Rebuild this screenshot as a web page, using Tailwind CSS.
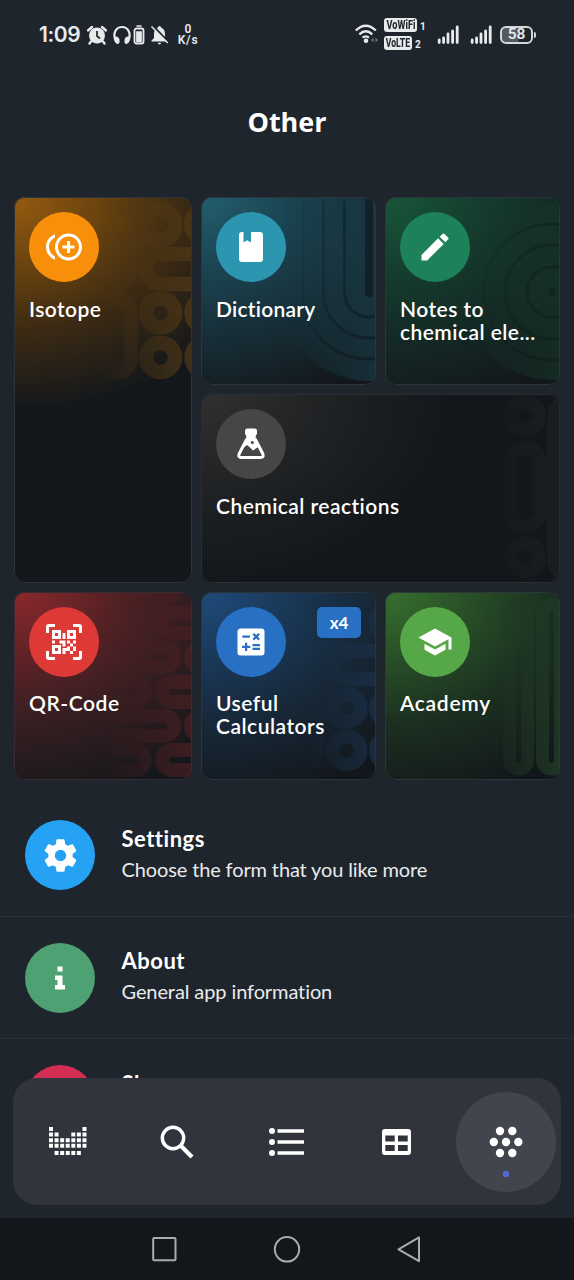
<!DOCTYPE html>
<html lang="en">
<head>
<meta charset="utf-8">
<meta name="viewport" content="width=device-width, initial-scale=1">
<title>Other</title>
<script src="https://cdn.jsdelivr.net/npm/@tailwindcss/browser@4"></script>
</head>
<body class="bg-[#1f252c]">
<div class="relative flex h-[1280px] w-[574px] flex-col overflow-hidden bg-[#1f252c] font-['Lato','Liberation_Sans',sans-serif] text-white">

  <!-- status bar -->
  <header class="flex h-[69px] shrink-0 items-center pl-[39px] text-[#e8eaec]">
    <span class="w-[48px] font-['Inter',sans-serif] text-[21px] leading-6 font-semibold whitespace-nowrap tracking-[-0.4px]">1:09</span>
    <svg class="mr-[6px] h-[20px] w-[20px]" viewBox="0 0 20 20" fill="currentColor"><circle cx="10" cy="10.5" r="8"/><path d="M1 5.5 5 2M19 5.5 15 2M4 16.5 2.5 18.5M16 16.5l1.500 2" fill="none" stroke="currentColor" stroke-width="2.4" stroke-linecap="round"/><path d="M10 6v5l3 2.500" fill="none" stroke="#1f252c" stroke-width="1.700"/></svg>
    <svg class="mr-[2px] h-[20px] w-[18px]" viewBox="0 0 18 20"><path d="M2.500 15.500C-.5 8 3 2 9 2s9.500 6 6.500 13.500" fill="none" stroke="currentColor" stroke-width="2.200"/><path d="M2 11.500q4-.5 4.500 3.500t-2 4q-3.500-1-3.500-7.500zM16 11.500q-4-.5-4.500 3.500t2 4q3.500-1 3.500-7.500z" fill="currentColor"/></svg>
    <svg class="mr-[5px] h-[20px] w-[12px]" viewBox="0 0 12 20"><rect x="1.500" y="3.500" width="9" height="15" rx="2" fill="none" stroke="currentColor" stroke-width="1.800"/><path d="M3.500 1h5M3.800 7h4.400v9.500H3.800z" stroke="currentColor" stroke-width="1.300" fill="currentColor"/></svg>
    <svg class="mr-[7px] h-[20px] w-[19px]" viewBox="0 0 19 20"><path d="M9.500 1q-1.500 0-1.500 1.500Q4 4 4 9v4L1.500 15.500v1h16v-1L15 13V9q0-5-4-6.500Q11 1 9.500 1zM7.800 17.800h3.400q-.3 1.700-1.700 1.700t-1.700-1.700z" fill="currentColor"/><path d="M3 1 18.500 17" stroke="#1f252c" stroke-width="2"/><path d="M1.500 1.500 17.800 18" stroke="currentColor" stroke-width="1.500"/></svg>
    <span class="flex w-[24px] flex-col items-center font-['Roboto',sans-serif] text-[12px] leading-[11px] font-semibold"><span>0</span><span class="text-[12px] leading-[11px] tracking-[0.8px]">K/s</span></span>

    <svg class="mt-[-1px] ml-[154px] h-[22px] w-[26px]" viewBox="0 0 26 22"><g fill="none" stroke="currentColor" stroke-width="2.300"><path d="M1.800 7.500q10-9.500 20 0M5.300 11.300q6.500-6 13 0M8.600 14.700q3.200-2.700 6.400 0"/></g><circle cx="12" cy="17.700" r="2.300" fill="currentColor"/><path d="M19.500 14.500v5l-2.500-2.500zM21.500 14.500v5l2.500-2.500z" fill="#72777d"/></svg>
    <span class="mt-[-1px] ml-[4px] flex w-[44px] flex-col gap-[4px] font-['Roboto',sans-serif]">
      <span class="flex items-end gap-[3px]"><span class="flex h-[14px] w-[33px] items-center justify-center rounded-[3px] bg-[#e8eaec] text-[12px] leading-none font-extrabold text-[#1f252c]"><span class="scale-x-[0.76]">VoWiFi</span></span><span class="text-[10px] leading-[10px] font-bold">1</span></span>
      <span class="flex items-end gap-[3px]"><span class="flex h-[14px] w-[28px] items-center justify-center rounded-[3px] bg-[#e8eaec] text-[12px] leading-none font-extrabold text-[#1f252c]"><span class="scale-x-[0.72]">VoLTE</span></span><span class="text-[10px] leading-[10px] font-bold">2</span></span>
    </span>
    <svg class="ml-[9px] h-[20px] w-[23px]" viewBox="0 0 23 20"><path d="M2.200 15v2.500M6.600 13v4.500M11 9v8.500M15.600 6v11.500M20.200 2v15.500" stroke="currentColor" stroke-width="2.800" stroke-linecap="round"/></svg>
    <svg class="ml-[10px] h-[20px] w-[23px]" viewBox="0 0 23 20"><path d="M2.200 15v2.500M6.600 13v4.500M11 9v8.500M15.600 6v11.500M20.200 2v15.500" stroke="currentColor" stroke-width="2.800" stroke-linecap="round"/></svg>
    <span class="ml-[7px] flex h-[18px] w-[33px] items-center justify-center rounded-[6px] border-2 border-[#d5d8da] bg-linear-to-r from-[#555a60] from-55% to-[#1f252c] to-60% font-['Roboto',sans-serif] text-[15.5px] leading-none font-semibold">58</span>
    <span class="ml-[1px] h-[6px] w-[2px] rounded-r-sm bg-[#d5d8da]"></span>
  </header>

  <h1 class="flex h-[128px] shrink-0 items-start justify-center pt-[34px] font-['Open_Sans','Noto_Sans',sans-serif] text-[27px] leading-[37px] font-bold">Other</h1>

  <!-- tiles -->
  <main class="ml-[14px] grid shrink-0 grid-cols-[178px_175px_175px] grid-rows-[188px_189px_188px] gap-x-[9px] gap-y-[9px] text-[21px] leading-[23px] font-semibold tracking-[0.45px]">

    <section class="relative row-span-2 overflow-hidden rounded-[11px] bg-[#13171b] p-[15px]">
      <div class="absolute inset-x-0 top-0 h-[215px] bg-[radial-gradient(ellipse_270px_215px_at_0_0,#965b10_0%,#6a430f_32%,#3c2a13_62%,#13171b_100%)]"></div>
      <svg class="absolute inset-x-0 top-0 h-[190px] w-[178px] [mask-image:linear-gradient(to_right,transparent_48%,black_115%)]" viewBox="0 0 178 190" fill="none" stroke="#503816" stroke-width="14.500">
        <rect x="10" y="12.500" width="151.500" height="30" rx="15"/><circle cx="192" cy="27.500" r="15"/>
        <rect x="10" y="57" width="106" height="30" rx="15"/><rect x="131" y="57" width="120" height="30" rx="15"/>
        <rect x="86" y="101.500" width="30.500" height="75" rx="15"/><circle cx="146.500" cy="116" r="14.500"/><circle cx="146.500" cy="160.500" r="14.500"/><circle cx="192" cy="116" r="14.500"/><circle cx="192" cy="160.500" r="14.500"/>
      </svg>
      <div class="absolute inset-0 rounded-[11px] border border-[#2e3239]"></div>
      <div class="relative flex size-[70px] items-center justify-center rounded-full bg-[#f88f0b]"><svg class="size-9" viewBox="0 0 24 24" fill="#fff"><path d="M16 8h-2v3h-3v2h3v3h2v-3h3v-2h-3zM2 12c0-2.790 1.640-5.200 4.010-6.320V3.520C2.520 4.760 0 8.090 0 12s2.520 7.240 6.010 8.480v-2.160C3.640 17.200 2 14.790 2 12zm13-9c-4.960 0-9 4.040-9 9s4.040 9 9 9 9-4.040 9-9-4.040-9-9-9zm0 16c-3.860 0-7-3.140-7-7s3.140-7 7-7 7 3.140 7 7-3.140 7-7 7z"/></svg></div>
      <h2 class="relative mt-[15px]">Isotope</h2>
    </section>

    <section class="relative overflow-hidden rounded-[11px] bg-[#13171b] p-[15px]">
      <div class="absolute inset-0 bg-[radial-gradient(ellipse_270px_215px_at_0_0,#235e6e_0%,#1b4552_32%,#17303a_62%,#13171b_100%)]"></div>
      <svg class="absolute inset-0 h-[188px] w-[175px] [mask-image:linear-gradient(to_right,transparent_48%,black_105%)]" viewBox="0 0 175 188" fill="none">
        <path d="M80 4v92a88 88 0 0 0 176 0V4z" fill="#1a3c47" fill-opacity=".75"/>
        <g stroke="#13222a" stroke-width="3"><path d="M101.500 4v92a66 66 0 0 0 132 0V4M122.500 4v92a45 45 0 0 0 90 0V4M143.500 4v92a24 24 0 0 0 48 0V4"/></g>
        <path d="M168 4v92" stroke="#121f27" stroke-width="8" stroke-linecap="round"/>
      </svg>
      <div class="absolute inset-0 rounded-[11px] border border-[#2c343c]"></div>
      <div class="relative flex size-[70px] items-center justify-center rounded-full bg-[#2c95af]"><svg class="size-9" viewBox="0 0 24 24" fill="#fff"><path d="M18 22a2 2 0 0 0 2-2V4a2 2 0 0 0-2-2h-6v7L9.500 7.500 7 9V2H6a2 2 0 0 0-2 2v16a2 2 0 0 0 2 2z"/></svg></div>
      <h2 class="relative mt-[15px] tracking-[0.25px]">Dictionary</h2>
    </section>

    <section class="relative overflow-hidden rounded-[11px] bg-[#13171b] p-[15px]">
      <div class="absolute inset-0 bg-[radial-gradient(ellipse_270px_215px_at_0_0,#18563b_0%,#153f2f_32%,#142c26_62%,#13171b_100%)]"></div>
      <svg class="absolute inset-0 h-[188px] w-[175px] [mask-image:linear-gradient(to_right,transparent_45%,black_110%)]" viewBox="0 0 175 188" fill="none">
        <circle cx="167" cy="95" r="88" fill="#163529" fill-opacity=".8"/>
        <g stroke="#12241f" stroke-width="3"><circle cx="167" cy="95" r="25"/><circle cx="167" cy="95" r="47"/><circle cx="167" cy="95" r="68"/></g><circle cx="167" cy="95" r="4" fill="#12241f"/>
      </svg>
      <div class="absolute inset-0 rounded-[11px] border border-[#2b3539]"></div>
      <div class="relative flex size-[70px] items-center justify-center rounded-full bg-[#1d8159]"><svg class="size-9" viewBox="0 0 24 24" fill="#fff"><path d="M3 17.250V21h3.750L17.810 9.940l-3.750-3.750zM20.710 7.040a1 1 0 0 0 0-1.410l-2.340-2.340a1 1 0 0 0-1.410 0l-1.830 1.830 3.750 3.750z"/></svg></div>
      <h2 class="relative mt-[15px] whitespace-nowrap">Notes to<br>chemical ele...</h2>
    </section>

    <section class="relative col-span-2 overflow-hidden rounded-[11px] bg-[#13171b] p-[15px]">
      <div class="absolute inset-0 bg-[radial-gradient(ellipse_250px_190px_at_0_0,#303030_0%,#212325_45%,#13171b_100%)]"></div>
      <svg class="absolute inset-0 h-[189px] w-[359px] [mask-image:linear-gradient(to_right,transparent_78%,black_100%)]" viewBox="0 0 359 189" fill="none" stroke="#1b1e21" stroke-width="14">
        <circle cx="324" cy="22" r="14"/><rect x="309.500" y="54" width="29" height="79" rx="14.500"/><circle cx="324" cy="163" r="14"/><rect x="353" y="8" width="29" height="172" rx="14.500"/>
      </svg>
      <div class="absolute inset-0 rounded-[11px] border border-[#2b2e32]"></div>
      <div class="relative flex size-[70px] items-center justify-center rounded-full bg-[#464646]"><svg class="size-9" viewBox="0 0 36 36"><path d="M13.800 13 6.200 27.800q-1.200 3.800 2 3.800h19.600q3.200 0 2-3.800L22.200 13" fill="none" stroke="#fff" stroke-width="3" stroke-linejoin="round"/><rect x="12" y="2.500" width="12" height="7" rx="2.200" fill="#fff"/><path d="M13.200 8h9.600v5.500l3.500 7.500-2 .5-4.300 3-3-3-3-2.500-3 2.500-2-1 4.200-8z" fill="#fff"/><circle cx="19.300" cy="16.500" r="1.500" fill="#464646"/></svg></div>
      <h2 class="relative mt-[15px]">Chemical reactions</h2>
    </section>

    <section class="relative overflow-hidden rounded-[11px] bg-[#13171b] p-[15px]">
      <div class="absolute inset-0 bg-[radial-gradient(ellipse_270px_215px_at_0_0,#8a292d_0%,#5c2226_32%,#351e21_62%,#13171b_100%)]"></div>
      <svg class="absolute inset-0 h-[188px] w-[178px] [mask-image:linear-gradient(to_right,transparent_48%,black_110%)]" viewBox="0 0 178 188" fill="none" stroke="#461f22" stroke-width="14">
        <rect x="10" y="-14" width="150" height="20" rx="10"/><rect x="10" y="21" width="121" height="20" rx="10"/><rect x="148" y="21" width="100" height="20" rx="10"/>
        <rect x="10" y="55" width="150" height="20" rx="10"/><rect x="177" y="55" width="60" height="20" rx="10"/><rect x="10" y="90" width="121" height="20" rx="10"/><rect x="148" y="90" width="100" height="20" rx="10"/>
        <rect x="10" y="124" width="150" height="20" rx="10"/><rect x="177" y="124" width="60" height="20" rx="10"/><rect x="10" y="158" width="121" height="20" rx="10"/><rect x="148" y="158" width="100" height="20" rx="10"/>
      </svg>
      <div class="absolute inset-0 rounded-[11px] border border-[#382b31]"></div>
      <div class="relative flex size-[70px] items-center justify-center rounded-full bg-[#dd3936]"><svg class="size-9" viewBox="0 0 24 24" fill="#fff"><path d="M4,4H10V10H4V4M20,4V10H14V4H20M14,15H16V13H14V11H16V13H18V11H20V13H18V15H20V18H18V20H16V18H13V20H11V16H14V15M16,15V18H18V15H16M4,20V14H10V20H4M6,6V8H8V6H6M16,6V8H18V6H16M6,16V18H8V16H6M4,11H6V13H4V11M9,11H13V15H11V13H9V11M11,6H13V10H11V6M2,2V6H0V2A2,2 0 0,1 2,0H6V2H2M22,0A2,2 0 0,1 24,2V6H22V2H18V0H22M2,18V22H6V24H2A2,2 0 0,1 0,22V18H2M22,22V18H24V22A2,2 0 0,1 22,24H18V22H22Z"/></svg></div>
      <h2 class="relative mt-[14px] tracking-[0.55px]">QR-Code</h2>
    </section>

    <section class="relative overflow-hidden rounded-[11px] bg-[#13171b] p-[15px]">
      <div class="absolute inset-0 bg-[radial-gradient(ellipse_270px_215px_at_0_0,#1f4b7b_0%,#1a3858_32%,#172838_62%,#13171b_100%)]"></div>
      <svg class="absolute inset-0 h-[188px] w-[175px] [mask-image:linear-gradient(to_right,transparent_60%,black_105%)]" viewBox="0 0 175 188" fill="none" stroke="#1a2e45" stroke-width="14">
        <rect x="10" y="16" width="136" height="28" rx="14"/><circle cx="189" cy="30" r="14"/><rect x="10" y="59" width="93" height="28" rx="14"/><rect x="131.500" y="59" width="100" height="28" rx="14"/>
        <rect x="88" y="102" width="28" height="72" rx="14"/><circle cx="145.500" cy="116" r="14"/><circle cx="145.500" cy="158.500" r="14"/><circle cx="189" cy="116" r="14"/><circle cx="189" cy="158.500" r="14"/>
      </svg>
      <div class="absolute inset-0 rounded-[11px] border border-[#2b333d]"></div>
      <div class="relative flex items-start justify-between">
        <div class="flex size-[70px] items-center justify-center rounded-full bg-[#2770c3]"><svg class="size-9" viewBox="0 0 24 24" fill="#fff"><path d="M19,3H5C3.890,3 3,3.900 3,5V19A2,2 0 0,0 5,21H19A2,2 0 0,0 21,19V5C21,3.890 20.100,3 19,3M13.030,7.060L14.090,6L15.500,7.410L16.910,6L17.970,7.060L16.560,8.470L17.970,9.880L16.910,10.940L15.500,9.530L14.090,10.940L13.030,9.880L14.440,8.470L13.030,7.060M6.250,7.720H11.250V9.220H6.250V7.720M11.500,16H9.500V18H8V16H6V14.500H8V12.500H9.500V14.500H11.500V16M18,17.250H13V15.750H18V17.250M18,14.750H13V13.250H18V14.750Z"/></svg></div>
        <span class="flex h-[31px] w-[44px] items-center justify-center rounded-[5px] bg-[#2770c3] text-[17px] font-bold tracking-normal">x4</span>
      </div>
      <h2 class="relative mt-[14px] tracking-[0.5px]">Useful<br>Calculators</h2>
    </section>

    <section class="relative overflow-hidden rounded-[11px] bg-[#13171b] p-[15px]">
      <div class="absolute inset-0 bg-[radial-gradient(ellipse_270px_215px_at_0_0,#37702f_0%,#284e27_32%,#1b2f20_62%,#13171b_100%)]"></div>
      <svg class="absolute inset-0 h-[188px] w-[175px] [mask-image:linear-gradient(to_right,transparent_55%,black_105%)]" viewBox="0 0 175 188" fill="none" stroke="#203925" stroke-width="13">
        <rect x="124.500" y="12" width="18" height="165" rx="9"/><rect x="157.500" y="12" width="18" height="165" rx="9"/>
      </svg>
      <div class="absolute inset-0 rounded-[11px] border border-[#2c3835]"></div>
      <div class="relative flex size-[70px] items-center justify-center rounded-full bg-[#55a748]"><svg class="size-9" viewBox="0 0 24 24" fill="#fff"><path d="M12,3L1,9L12,15L21,10.090V17H23V9M5,13.180V17.180L12,21L19,17.180V13.180L12,17L5,13.180Z"/></svg></div>
      <h2 class="relative mt-[14px] tracking-[0.7px]">Academy</h2>
    </section>
  </main>

  <!-- list -->
  <ul class="mt-[14px]">
    <li class="flex h-[123px] items-center gap-[26.500px] border-b border-[#2b3037] pl-[25px]">
      <div class="flex size-[70px] shrink-0 items-center justify-center rounded-full bg-[#25a2f3]"><svg class="size-[39px]" viewBox="0 0 24 24" fill="#fff"><path d="M12,15.500A3.500,3.500 0 0,1 8.500,12A3.500,3.500 0 0,1 12,8.500A3.500,3.500 0 0,1 15.500,12A3.500,3.500 0 0,1 12,15.500M19.430,12.970C19.470,12.650 19.500,12.330 19.500,12C19.500,11.670 19.470,11.340 19.430,11L21.540,9.370C21.730,9.220 21.780,8.950 21.660,8.730L19.660,5.270C19.540,5.050 19.270,4.960 19.050,5.050L16.560,6.050C16.040,5.660 15.500,5.320 14.870,5.070L14.500,2.420C14.460,2.180 14.250,2 14,2H10C9.750,2 9.540,2.180 9.500,2.420L9.130,5.070C8.500,5.320 7.960,5.660 7.440,6.050L4.950,5.050C4.730,4.960 4.460,5.050 4.340,5.270L2.340,8.730C2.210,8.950 2.270,9.220 2.460,9.370L4.570,11C4.530,11.340 4.500,11.670 4.500,12C4.500,12.330 4.530,12.650 4.570,12.970L2.460,14.630C2.270,14.780 2.210,15.050 2.340,15.270L4.340,18.730C4.460,18.950 4.730,19.030 4.950,18.950L7.440,17.940C7.960,18.340 8.500,18.680 9.130,18.930L9.500,21.580C9.540,21.820 9.750,22 10,22H14C14.250,22 14.460,21.820 14.500,21.580L14.870,18.930C15.500,18.670 16.040,18.340 16.560,17.940L19.050,18.950C19.270,19.030 19.540,18.950 19.660,18.730L21.660,15.270C21.780,15.050 21.730,14.780 21.540,14.630L19.430,12.970Z"/></svg></div>
      <div class="pb-[3px]"><h3 class="text-[22px] leading-[30px] font-bold tracking-[0.5px]">Settings</h3><p class="text-[20px] leading-[30px] tracking-[-0.13px] text-[#e9ebed]">Choose the form that you like more</p></div>
    </li>
    <li class="flex h-[122px] items-center gap-[26.500px] border-b border-[#2b3037] pl-[25px]">
      <div class="flex size-[70px] shrink-0 items-center justify-center rounded-full bg-[#4ea172]"><svg class="h-6 w-3" viewBox="0 0 12 24" fill="#fff"><path d="M3.500 .5h5v5h-5zM1 9.500h7.500V19H11v4.500H1V19h2.500v-5H1z"/></svg></div>
      <div class="pb-[3px]"><h3 class="text-[22px] leading-[30px] font-bold tracking-[0.5px]">About</h3><p class="text-[20px] leading-[30px] tracking-[-0.1px] text-[#e9ebed]">General app information</p></div>
    </li>
    <li class="flex h-[122px] items-center gap-[26.500px] pl-[25px]">
      <div class="size-[70px] shrink-0 rounded-full bg-[#d42d54]"></div>
      <div class="pb-[3px]"><h3 class="text-[22px] leading-[30px] font-bold tracking-[0.5px]">Share</h3><p class="text-[20px] leading-[30px]">&nbsp;</p></div>
    </li>
  </ul>

  <!-- floating tab bar and system keys over the scrolled list -->
  <div class="absolute inset-x-0 bottom-0">
    <nav class="mx-[13px] mb-[13px] flex h-[127px] items-center rounded-[24px] bg-[#31333d]">
      <div class="flex flex-1 justify-center"><svg class="h-[29px] w-[38px]" viewBox="0 0 38 29" fill="none" stroke="#fff" stroke-width="4" stroke-dasharray="4 1.580"><path d="M0 2h4"/><path d="M33.500 2h4"/><path d="M0 7.600h9.600"/><path d="M22.320 7.600h15.200"/><path d="M0 13.200h37.500"/><path d="M0 18.800h37.500"/><path d="M5.580 26h26.300"/></svg></div>
      <div class="flex flex-1 justify-center"><svg class="h-[34px] w-[34px]" viewBox="0 0 34 34" fill="none" stroke="#fff"><circle cx="13" cy="13" r="10.700" stroke-width="3.400"/><path d="M20.800 20.800 32 32" stroke-width="4.200"/></svg></div>
      <div class="flex flex-1 justify-center"><svg class="h-[30px] w-[36px]" viewBox="0 0 36 30"><g fill="#fff"><circle cx="3" cy="4" r="3"/><circle cx="3" cy="15" r="3"/><circle cx="3" cy="26" r="3"/></g><path d="M8.500 4H35M8.500 15H35M8.500 26H35" stroke="#fff" stroke-width="3.700"/></svg></div>
      <div class="flex flex-1 justify-center"><svg class="h-[26px] w-[29px]" viewBox="0 0 29 26" fill="#fff" fill-rule="evenodd"><path d="M3 0h23a3 3 0 0 1 3 3v20a3 3 0 0 1-3 3H3a3 3 0 0 1-3-3V3a3 3 0 0 1 3-3zM3.300 6.500v6h9.400v-6zM16 6.500v6h9.700v-6zM3.300 16v6h9.400v-6zM16 16v6h9.700v-6z"/></svg></div>
      <div class="flex flex-1 justify-center"><div class="flex size-[100px] shrink-0 items-center justify-center rounded-full bg-[#42444e]"><svg class="size-[100px]" viewBox="0 0 100 100" fill="#fff"><circle cx="44" cy="39" r="4.200"/><circle cx="56.300" cy="39" r="4.200"/><circle cx="37.800" cy="50" r="4.200"/><circle cx="50" cy="50" r="4.200"/><circle cx="62.300" cy="50" r="4.200"/><circle cx="44" cy="61" r="4.200"/><circle cx="56.300" cy="61" r="4.200"/><circle cx="50" cy="82" r="3.300" fill="#5269cd"/></svg></div></div>
    </nav>
    <div class="flex h-[62px] items-center bg-[#13171b] pl-[152px]">
      <svg class="h-[28px] w-[270px]" viewBox="0 0 270 28" fill="none" stroke="#a9acae" stroke-width="2" stroke-linejoin="round"><rect x="1.200" y="3" width="22.300" height="22.300" rx="1"/><circle cx="135" cy="14.300" r="12.200"/><path d="M246.500 14.300 267 2.400v23.800z"/></svg>
    </div>
  </div>
</div>
</body>
</html>
